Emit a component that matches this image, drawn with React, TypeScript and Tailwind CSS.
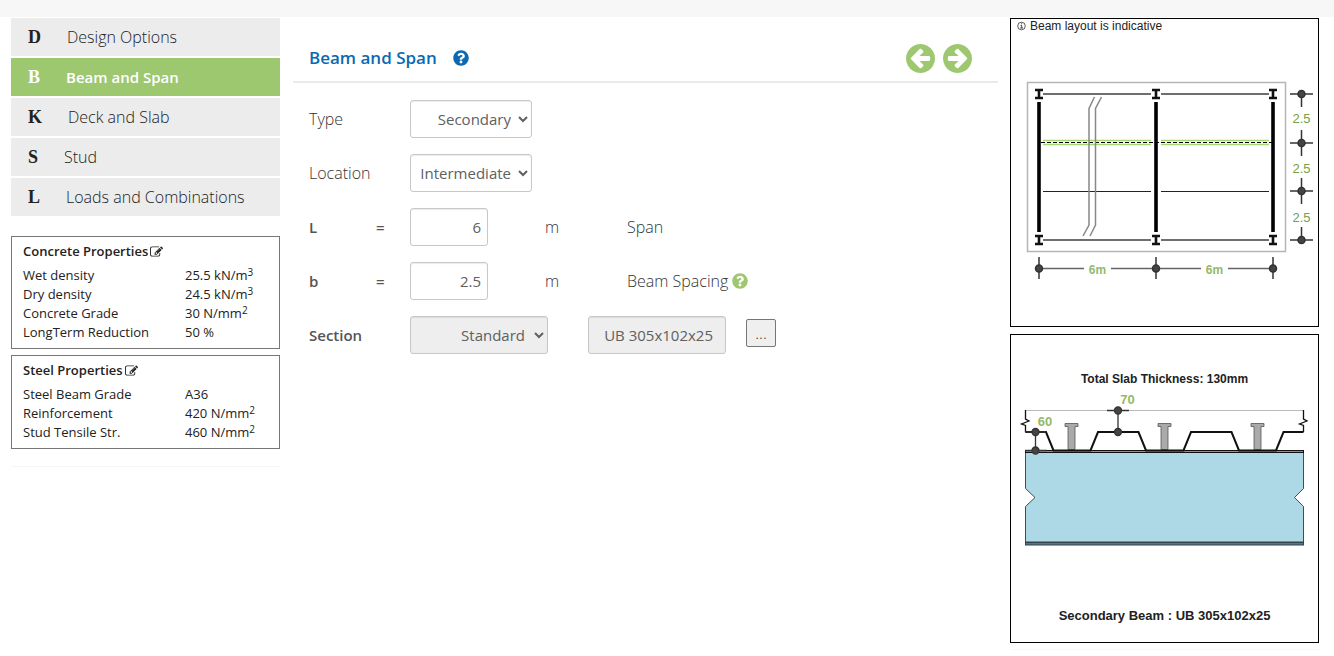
import { ReactNode, useState } from 'react';
import { FaQuestionCircle } from 'react-icons/fa';

const navItems = [
  { key: 'D', label: 'Design Options' },
  { key: 'B', label: 'Beam and Span' },
  { key: 'K', label: 'Deck and Slab' },
  { key: 'S', label: 'Stud' },
  { key: 'L', label: 'Loads and Combinations' },
];

type Property = { name: string; value: string; power?: string };

const concrete: Property[] = [
  { name: 'Wet density', value: '25.5 kN/m', power: '3' },
  { name: 'Dry density', value: '24.5 kN/m', power: '3' },
  { name: 'Concrete Grade', value: '30 N/mm', power: '2' },
  { name: 'LongTerm Reduction', value: '50 %' },
];

const steel: Property[] = [
  { name: 'Steel Beam Grade', value: 'A36' },
  { name: 'Reinforcement', value: '420 N/mm', power: '2' },
  { name: 'Stud Tensile Str.', value: '460 N/mm', power: '2' },
];

function EditIcon() {
  return (
    <svg viewBox="0 128 1792 1408" className="h-[11px] w-[13px] fill-current" aria-hidden="true">
      <path d="M888 1184l116-116-152-152-116 116v56h96v96h56zM1328 464q-16-16-33 1L945 815q-17 17-1 33t33-1l350-350q17-17 1-33zM1408 1058v190q0 119-84.5 203.5T1120 1536H288q-119 0-203.5-84.5T0 1248V416q0-119 84.5-203.5T288 128h832q63 0 117 25 15 7 18 23 3 17-9 29l-49 49q-14 14-32 8-23-6-45-6H288q-66 0-113 47t-47 113v832q0 66 47 113t113 47h832q66 0 113-47t47-113v-126q0-13 9-22l64-64q15-15 35-7t20 29zM1312 320l288 288-672 672H640V992zM1756 452l-92 92-288-288 92-92q28-28 68-28t68 28l152 152q28 28 28 68t-28 68z" />
    </svg>
  );
}

function ArrowCircle({ className = '' }: { className?: string }) {
  return (
    <svg viewBox="0 0 1536 1536" className={`size-[29px] fill-[#9dc870] ${className}`} aria-hidden="true">
      <path d="M1280 832V704q0-26-19-45t-45-19H714l189-189q19-19 19-45t-19-45l-91-91q-18-18-45-18t-45 18L360 632l-91 91q-18 18-18 45t18 45l91 91 362 362q18 18 45 18t45-18l91-91q18-18 18-45t-18-45L714 896h502q26 0 45-19t19-45zm256-64q0 209-103 385.500T1153.500 1433 768 1536t-385.500-103T103 1153.500 0 768t103-385.500T382.500 103 768 0t385.500 103T1433 382.500 1536 768z" />
    </svg>
  );
}

function PropertyBox({ title, rows }: { title: string; rows: Property[] }) {
  return (
    <section className="border border-[#777] px-[11px] pt-1 pb-1.5 text-[13px] text-[#222]">
      <h2 className="flex items-center gap-0.5 leading-5 font-semibold">
        {title}
        <button type="button" aria-label={`Edit ${title}`}>
          <EditIcon />
        </button>
      </h2>
      <table className="mt-[5px] w-full table-fixed leading-[19px]">
        <tbody>
          {rows.map((row) => (
            <tr key={row.name}>
              <th scope="row" className="w-[162px] p-0 text-left font-normal">{row.name}</th>
              <td className="p-0">
                {row.value}
                {row.power && <sup className="-top-1 text-[10px]">{row.power}</sup>}
              </td>
            </tr>
          ))}
        </tbody>
      </table>
    </section>
  );
}

function FormRow({ children }: { children: ReactNode }) {
  return <div className="grid h-[38px] grid-cols-[67px_34px_135px_82px_1fr] items-center">{children}</div>;
}

const columnXs = [28, 145, 262];
const bays = [32, 150];
const gridYs = [75, 124, 172, 221];

function BeamLayout() {
  return (
    <svg viewBox="0 0 307 307" className="block w-full font-['Liberation_Sans',Arial,sans-serif]">
      <circle cx="10.500" cy="7" r="3.800" fill="none" stroke="#333" strokeWidth="0.800" />
      <path d="M9.500 6.500h1.200v2.500M9.200 9h2.800M10.600 4.200v1.200" fill="none" stroke="#333" strokeWidth="0.900" />
      <text x="19" y="11" fontSize="12" fill="#222">Beam layout is indicative</text>
      <rect x="16.500" y="63.500" width="258" height="169" fill="none" stroke="#b5b5b5" strokeWidth="1.500" />

      {/* edge beams and the intermediate secondaries */}
      {bays.map((x) => (
        <g key={x}>
          <path d={`M${x} 75h108M${x} 221h108`} stroke="#6f6f6f" strokeWidth="1.800" />
          <path d={`M${x} 121.500h108M${x} 125.500h108`} stroke="#a6d672" strokeWidth="1.400" />
          <path d={`M${x} 172.500h108`} stroke="#222" strokeWidth="1.200" />
        </g>
      ))}
      <path d="M30 123.500H261" stroke="#000" strokeWidth="1.200" strokeDasharray="4 2" />

      {/* deck span symbol */}
      <path
        d="M83.500 78L78 89.500V206L72 217M90.500 78L84.500 89.500V206L79 217"
        fill="none"
        stroke="#888"
        strokeWidth="1.500"
      />

      {columnXs.map((x) => (
        <g key={x}>
          <path d={`M${x} 83V213`} stroke="#000" strokeWidth="3.600" />
          {[75, 221].map((y) => (
            <path key={y} d={`M${x - 4} ${y - 4}h8m-8 8h8m-4-8v8`} stroke="#111" strokeWidth="2.600" />
          ))}
        </g>
      ))}

      {gridYs.map((y, i) => (
        <g key={y} stroke="#333" strokeWidth="1.500">
          <path d={`M279 ${y}h23`} />
          <path d={`M290.500 ${i === 0 ? y : y - 13}V${i === 3 ? y : y + 13}`} />
          <circle cx="290.500" cy={y} r="3.500" fill="#444" />
        </g>
      ))}
      {[104, 154, 203].map((y) => (
        <text key={y} x="290.500" y={y} fontSize="13" textAnchor="middle" fill="#74a04a">2.5</text>
      ))}

      <path d="M28 249.500H73M100 249.500H190M217 249.500H262" stroke="#666" strokeWidth="1.500" />
      {columnXs.map((x) => (
        <g key={x} stroke="#333" strokeWidth="1.500">
          <path d={`M${x} 238v22`} />
          <circle cx={x} cy="249.500" r="3.500" fill="#444" />
        </g>
      ))}
      {[86.5, 203.5].map((x) => (
        <text key={x} x={x} y="255" fontSize="12" fontWeight="bold" textAnchor="middle" fill="#93b96b">6m</text>
      ))}
    </svg>
  );
}

function SlabSection() {
  return (
    <svg viewBox="0 0 307 307" className="block w-full font-['Liberation_Sans',Arial,sans-serif]">
      <text x="153.500" y="48" fontSize="12" fontWeight="bold" textAnchor="middle" fill="#222">Total Slab Thickness: 130mm</text>

      <path d="M14 75.500H293" stroke="#bbb" />
      <path
        d="M14.500 75V84L18 86L10.500 89L14.500 90.500V97M292.500 75V84L296 86L288.500 89L292.500 90.500V97"
        fill="none"
        stroke="#111"
        strokeWidth="1.300"
      />

      {[60.5, 153.5, 246.5].map((x) => (
        <path
          key={x}
          d={`M${x - 6.5} 88.500h13v3h-3v23h-7v-23h-3z`}
          fill="#aaa"
          stroke="#555"
          strokeWidth="0.800"
        />
      ))}

      {/* steel beam with break marks at both ends */}
      <path
        d="M14.500 117H292.500V153.500L283.500 162.500L292.500 171.500V207H14.500V171.500L24 162.500L14.500 153.500Z"
        fill="#add8e6"
        stroke="#222"
        strokeWidth="0.800"
      />
      <rect x="14.500" y="115.500" width="278" height="2" fill="#7b98a2" stroke="#111" />
      <rect x="14.500" y="207.500" width="278" height="2.500" fill="#5b7681" stroke="#33434a" />

      <path
        d="M14.500 97H35L42.500 115.500H79.500L87 97H127.500L135 115.500H172.500L180 97H220.500L228 115.500H265L272.500 97H292.500"
        fill="none"
        stroke="#111"
        strokeWidth="2"
      />

      <g stroke="#333" strokeWidth="1.300">
        <path d="M24.500 97v18.500M14 97h21M14 115.500h22" />
        <path d="M107 75.500V97M96 75.500h22" />
        <circle cx="24.500" cy="97" r="3.500" fill="#444" />
        <circle cx="24.500" cy="115.500" r="3.500" fill="#444" />
        <circle cx="107" cy="75.500" r="3.500" fill="#444" />
        <circle cx="107" cy="97" r="3.500" fill="#444" />
      </g>
      <g fontSize="13" fontWeight="bold" textAnchor="middle" fill="#93b96b">
        <text x="116.500" y="69">70</text>
        <text x="34" y="91">60</text>
      </g>

      <text x="153.500" y="285" fontSize="13" fontWeight="bold" textAnchor="middle" fill="#222">Secondary Beam : UB 305x102x25</text>
    </svg>
  );
}

const fieldClass = 'h-[38px] rounded-[3px] border border-[#c8c8c8] text-right text-[15px] font-normal text-[#606060] shadow-[inset_0_1px_1px_rgba(0,0,0,0.08)] [text-align-last:right]';

export default function App() {
  const [active, setActive] = useState('B');
  const [type, setType] = useState('Secondary');
  const [location, setLocation] = useState('Intermediate');
  const [span, setSpan] = useState('6');
  const [spacing, setSpacing] = useState('2.5');

  return (
    <div className="min-h-screen bg-white font-['Open_Sans',sans-serif] text-base text-[#333]">
      <div className="h-[17px] bg-[#f7f7f7]" />
      <div className="flex items-start pt-px pr-[15px] pl-[11px]">
        <aside className="w-[269px] shrink-0">
          <nav className="space-y-0.5">
            {navItems.map((item) => (
              <a
                key={item.key}
                href="#"
                onClick={() => setActive(item.key)}
                className={
                  item.key === active
                    ? 'flex h-[38px] items-center gap-[26px] bg-[#9dc870] pl-[17px] text-[15px] font-semibold text-white'
                    : 'flex h-[38px] items-center gap-[26px] bg-[#ececec] pl-[17px] font-light text-[#222]'
                }
              >
                <span className="font-['Liberation_Serif',serif] text-lg font-bold">{item.key}</span>
                {item.label}
              </a>
            ))}
          </nav>
          <div className="mt-5 space-y-1.5 border-b border-[#f5f5f5] pb-[17px]">
            <PropertyBox title="Concrete Properties" rows={concrete} />
            <PropertyBox title="Steel Properties" rows={steel} />
          </div>
        </aside>

        <main className="mr-3 ml-[13px] min-w-0 flex-1">
          <header className="flex h-[65px] items-center border-b-2 border-[#eaeaea] px-4 pt-[17px]">
            <h1 className="text-[17px] font-semibold text-[#0a69b2]">Beam and Span</h1>
            <button type="button" aria-label="Help" className="ml-4 text-[#0a69b2]">
              <FaQuestionCircle size={16} />
            </button>
            <div className="mr-[10px] ml-auto flex gap-2">
              <button type="button" aria-label="Previous">
                <ArrowCircle />
              </button>
              <button type="button" aria-label="Next">
                <ArrowCircle className="rotate-180" />
              </button>
            </div>
          </header>

          <form className="space-y-4 px-4 pt-[17px] font-light">
            <FormRow>
              <label htmlFor="type" className="col-span-2">Type</label>
              <select id="type" value={type} onChange={(e) => setType(e.target.value)} className={`w-[122px] px-1 ${fieldClass}`}>
                <option>Primary</option>
                <option>Secondary</option>
              </select>
            </FormRow>
            <FormRow>
              <label htmlFor="location" className="col-span-2">Location</label>
              <select id="location" value={location} onChange={(e) => setLocation(e.target.value)} className={`w-[122px] px-1 ${fieldClass}`}>
                <option>Intermediate</option>
                <option>Edge</option>
              </select>
            </FormRow>
            <FormRow>
              <label htmlFor="span" className="text-[15px] font-semibold text-[#555]">L</label>
              <span className="text-[15px] font-semibold text-[#555]">=</span>
              <input id="span" value={span} onChange={(e) => setSpan(e.target.value)} className={`w-[78px] px-1.5 ${fieldClass}`} />
              <span>m</span>
              <span>Span</span>
            </FormRow>
            <FormRow>
              <label htmlFor="spacing" className="text-[15px] font-semibold text-[#555]">b</label>
              <span className="text-[15px] font-semibold text-[#555]">=</span>
              <input id="spacing" value={spacing} onChange={(e) => setSpacing(e.target.value)} className={`w-[78px] px-1.5 ${fieldClass}`} />
              <span>m</span>
              <span className="flex items-center gap-1">
                Beam Spacing
                <button type="button" aria-label="Beam spacing help" className="text-[#9dc870]">
                  <FaQuestionCircle size={16} />
                </button>
              </span>
            </FormRow>
            <FormRow>
              <label htmlFor="section" className="col-span-2 text-[15px] font-semibold text-[#555]">Section</label>
              <div className="col-span-3 flex">
                <select id="section" className={`w-[138px] bg-[#eee] px-1.5 ${fieldClass}`}>
                  <option>Standard</option>
                </select>
                <input aria-label="Section size" readOnly value="UB 305x102x25" className={`ml-10 w-[138px] bg-[#eee] pr-3 pl-2 ${fieldClass}`} />
                <button type="button" className="mt-[3px] ml-5 h-7 w-[30px] rounded-[2px] border border-[#767676] bg-[#efefef]">...</button>
              </div>
            </FormRow>
          </form>
        </main>

        <aside className="w-[309px] shrink-0 space-y-[7px] border-b border-[#f8f8f8] pb-1.5">
          <div className="border border-black">
            <BeamLayout />
          </div>
          <div className="border border-black">
            <SlabSection />
          </div>
        </aside>
      </div>
    </div>
  );
}
